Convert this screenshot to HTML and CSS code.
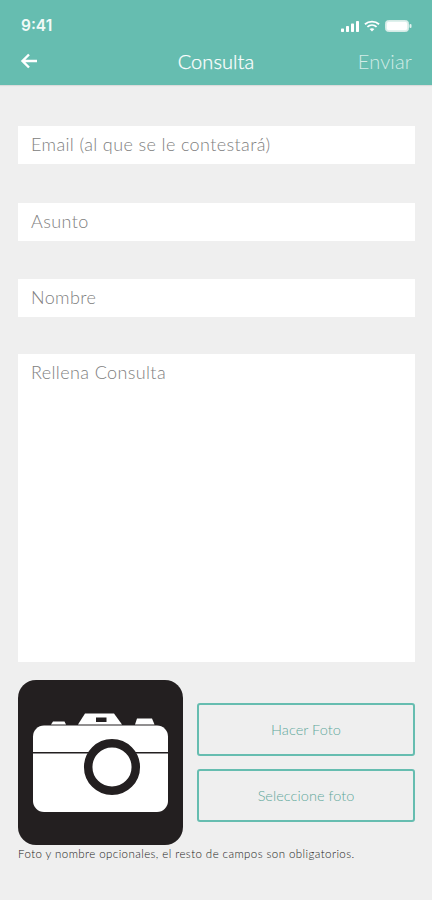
FILE: index.html
```html
<!DOCTYPE html>
<html lang="es">
<head>
<meta charset="utf-8">
<title>Consulta</title>
<link rel="stylesheet" href="styles.css">
</head>
<body>
<header class="header">
  <div class="status">
    <span class="time">9:41</span>
    <div class="status-icons">
      <svg class="signal" width="18" height="11" viewBox="0 0 18 11"><rect x="0" y="7.500" width="3" height="3.500" rx=".7"/><rect x="5" y="5" width="3" height="6" rx=".7"/><rect x="10" y="2.500" width="3" height="8.500" rx=".7"/><rect x="15" y="0" width="3" height="11" rx=".7"/></svg>
      <svg class="wifi" width="16" height="12" viewBox="0 0 17 12"><path d="M1 4.200C5.200.4 11.800.4 16 4.200M3.600 6.900c2.800-2.400 7-2.400 9.800 0" fill="none" stroke="#fff" stroke-width="2"/><path d="M6 9.300c1.500-1.200 3.500-1.200 5 0l-2.500 2.600z" fill="#fff"/></svg>
      <svg class="battery" width="27" height="12" viewBox="0 0 27 12"><rect x=".5" y=".5" width="23" height="11" rx="3" fill="#dff1ed" stroke="#d5ebe6"/><rect x="2" y="2" width="20" height="8" rx="1.500" fill="#fff"/><rect x="24.500" y="4" width="2" height="4" rx="1" fill="#e3f2ef"/></svg>
    </div>
  </div>
  <nav class="nav">
    <svg class="back" width="18" height="16" viewBox="0 0 18 16"><path d="M17 8H2.500M9 1.500 2.500 8 9 14.500" fill="none" stroke="#fff" stroke-width="2.400"/></svg>
    <h1 class="title">Consulta</h1>
    <span class="send">Enviar</span>
  </nav>
</header>
<main class="form">
  <div class="field">Email (al que se le contestará)</div>
  <div class="field">Asunto</div>
  <div class="field field-third">Nombre</div>
  <div class="field field-area">Rellena Consulta</div>
  <section class="photo-row">
    <div class="photo">
      <svg width="165" height="165" viewBox="0 0 165 165">
        <rect width="165" height="165" rx="18" fill="#231f20"/>
        <path d="M60 44.500 67 33.500H96L104 44.500Z" fill="#fff"/>
        <rect x="78" y="37.500" width="10.500" height="4.500" fill="#231f20"/>
        <path d="M33 44.500 35 41.500H46.500L48 44.500ZM117 44.500 119 38.500H134L136.500 44.500Z" fill="#fff"/>
        <rect x="15" y="45.500" width="135" height="86.500" rx="11" fill="#fff"/>
        <rect x="15" y="72" width="135" height="1.500" fill="#231f20"/>
        <circle cx="94" cy="87" r="23.800" fill="#fff" stroke="#231f20" stroke-width="8.500"/>
      </svg>
    </div>
    <div class="actions">
      <button class="action" type="button">Hacer Foto</button>
      <button class="action" type="button">Seleccione foto</button>
    </div>
  </section>
  <p class="note">Foto y nombre opcionales, el resto de campos son obligatorios.</p>
</main>
</body>
</html>
```
FILE: styles.css
```css
* { box-sizing: border-box; }
html, body { margin: 0; padding: 0; }
body {
  width: 432px;
  height: 900px;
  overflow: hidden;
  background: #efefef;
  font-family: "Lato", "Liberation Sans", sans-serif;
}
.header {
  height: 85px;
  background: #66bdb0;
  color: #fff;
  padding: 0 20px;
  box-shadow: 0 1px 1px rgba(0,0,0,.08);
}
.status {
  height: 50px;
  padding-top: 16px;
  display: flex;
  justify-content: space-between;
  align-items: flex-start;
}
.time {
  font: 600 15.500px/20px "Inter", "Liberation Sans", sans-serif;
  margin-left: 1px;
  color: #f2faf8;
}
.status-icons {
  display: flex;
  align-items: center;
  gap: 5px;
  height: 20px;
}
.signal { fill: #fff; }
.nav {
  height: 24px;
  margin-top: -1px;
  display: grid;
  grid-template-columns: 1fr auto 1fr;
  align-items: center;
}
.title {
  margin: 0;
  font-size: 20px;
  font-weight: 300;
  letter-spacing: .1px;
  -webkit-text-stroke: .25px #fff;
}
.send {
  justify-self: end;
  margin-right: 0;
  font-size: 20px;
  font-weight: 300;
  letter-spacing: .15px;
  color: #d3ece7;
}
.form {
  padding: 41px 17px 0 18px;
}
.field {
  height: 38px;
  margin-bottom: 39px;
  padding: 0 13px;
  background: #fff;
  color: #808080;
  font-size: 18px;
  font-weight: 300;
  line-height: 37px;
  letter-spacing: .38px;
}
.field-third { margin-top: -1px; }
.field-area {
  height: 308px;
  margin-top: -2px;
  margin-bottom: 18px;
  line-height: 36px;
}
.photo-row {
  display: flex;
  gap: 14px;
  align-items: flex-start;
}
.photo { width: 165px; height: 165px; flex: none; }
.photo svg { display: block; }
.actions {
  flex: 1;
  display: flex;
  flex-direction: column;
  gap: 13.500px;
  padding-top: 23px;
}
.action {
  height: 52.500px;
  border: 2.500px solid #66bdb0;
  border-radius: 3px;
  background: transparent;
  color: #5fa89b;
  font-family: inherit;
  font-size: 14.500px;
  font-weight: 300;
  letter-spacing: .05px;
}
.note {
  margin: 1px 0 0;
  font-size: 11.500px;
  font-weight: 300;
  line-height: 16px;
  letter-spacing: .42px;
  color: #222;
}
```
